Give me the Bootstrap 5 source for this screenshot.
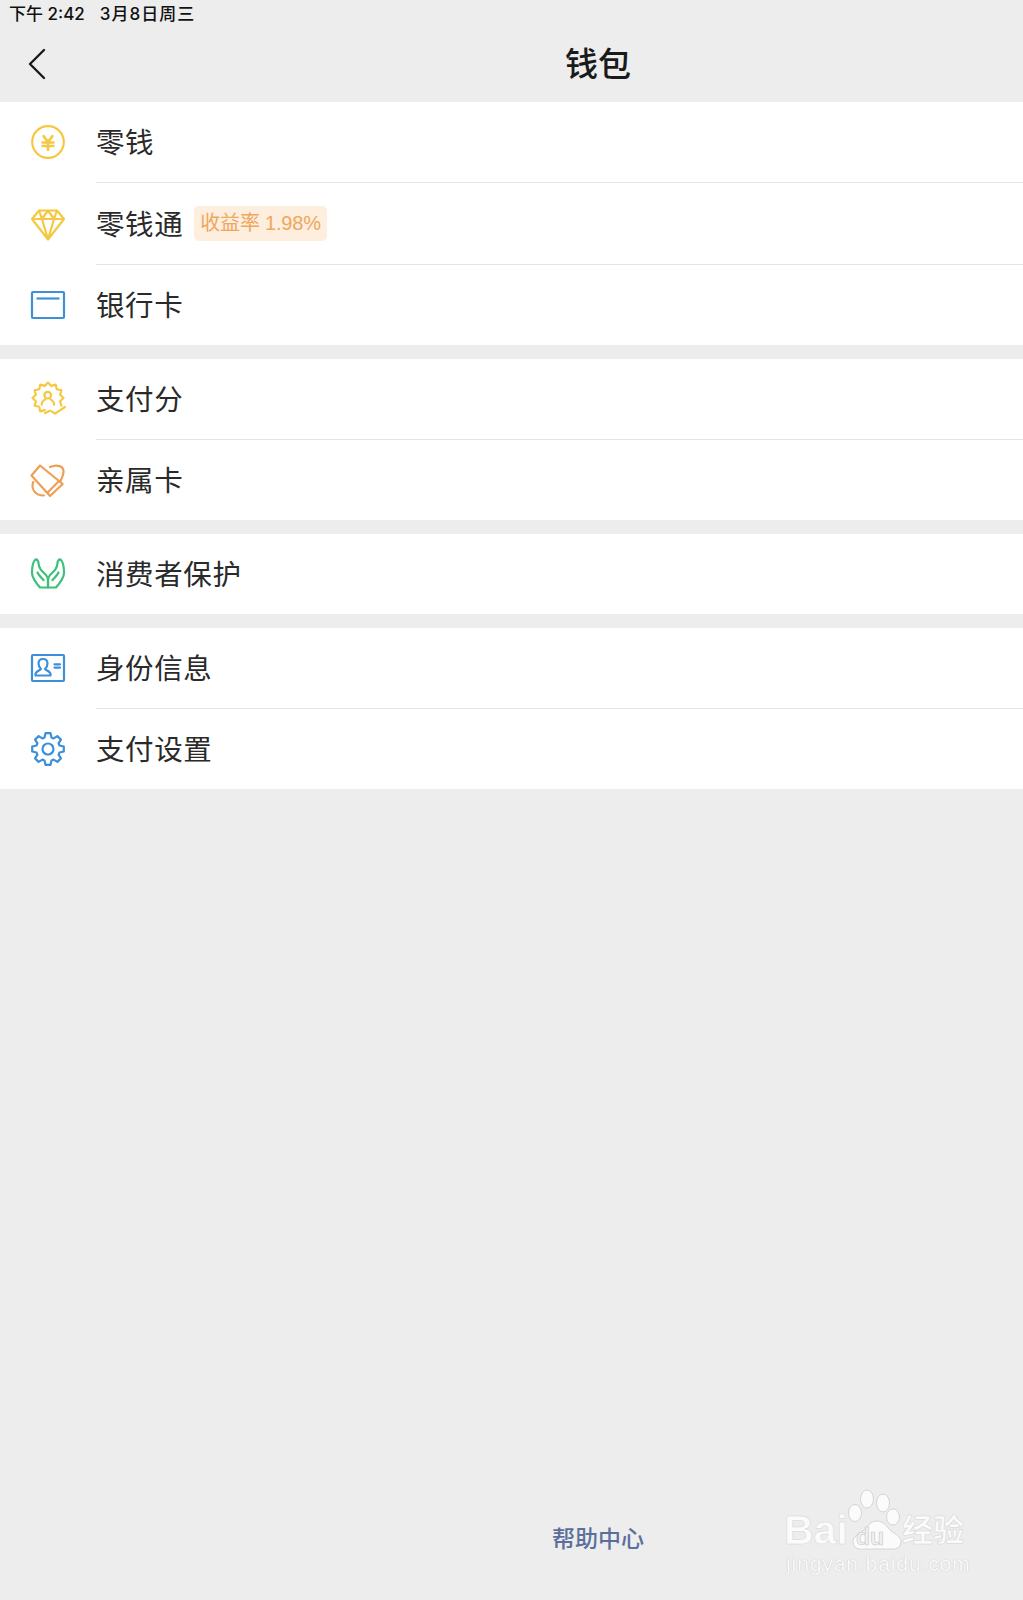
<!DOCTYPE html>
<html lang="zh-CN">
<head>
  <meta charset="UTF-8" />
  <meta name="viewport" content="width=device-width, initial-scale=1.0"/>
  <title>钱包</title>
  <link href="https://cdn.jsdelivr.net/npm/bootstrap@5.3.2/dist/css/bootstrap.min.css" rel="stylesheet" />
  <style>
    body {
      background: #ededed;
      font-family: "Noto Sans CJK SC", "Liberation Sans", sans-serif;
      height: 1600px;
      overflow: hidden;
      position: relative;
    }
    .status-bar {
      height: 29px;
      padding-left: 9px;
      font-size: 17px;
      font-weight: 500;
      line-height: 29px;
      color: #111;
      gap: 15px;
      font-family: "Inter", "Noto Sans CJK SC", sans-serif;
    }
    .status-date { letter-spacing: 1px; }
    .title-bar { height: 73px; padding-left: 173px; }
    .back-btn {
      position: absolute;
      left: 26px;
      top: 46px;
    }
    .title-text { font-size: 33px; font-weight: 500; color: #1a1a1a; line-height: 1; margin-top: -6px; }
    .wallet-group { background: #fff; margin-bottom: 14px; }
    .wallet-row { height: 80px; padding-left: 31px; }
    .wallet-row + .wallet-row { height: 81px; }
    .wallet-row.row-tall { height: 82px; }
    .wallet-row svg { width: 34px; height: 34px; flex-shrink: 0; overflow: visible; fill: none; stroke-width: 2.2; stroke-linecap: round; stroke-linejoin: round; }
    .row-body {
      height: 100%;
      margin-left: 31px;
      padding-bottom: 2px;
      font-size: 28.5px;
      color: #2a2a2a;
      letter-spacing: .6px;
    }
    .row-tall .row-body { padding-bottom: 0; }
    .wallet-row + .wallet-row .row-body { border-top: 1px solid #e4e4e4; }
    .rate-tag {
      background: #fdeedd;
      color: #eea75f;
      font-size: 20px;
      line-height: 35px;
      height: 35px;
      padding: 0 6px;
      margin-left: 11px;
      border-radius: 5px;
      letter-spacing: -.2px;
      font-family: "Liberation Sans", "Noto Sans CJK SC", sans-serif;
    }
    .help-link {
      position: absolute;
      left: 173px;
      right: 0;
      top: 1520px;
      text-align: center;
      font-size: 23px;
      font-weight: 500;
      color: #5b6f9c;
      line-height: 34px;
    }
    .watermark {
      position: absolute;
      left: 784px;
      top: 1488px;
      width: 190px;
      height: 100px;
      color: #fbfbfb;
    }
    .wm-bai, .wm-du, .wm-jy { position: absolute; -webkit-text-stroke: .5px #d4d4d4; }
    .wm-bai { left: 0; top: 22px; font: 700 41px/1 "Liberation Sans", sans-serif; }
    .wm-du { left: 72px; top: 38px; font: 700 23px/1 "Liberation Sans", sans-serif; color: #f0f0f0; -webkit-text-stroke: .6px #c8c8c8; }
    .wm-jy { left: 118px; top: 21px; font: 700 31px/1.2 "Noto Sans CJK SC", sans-serif; white-space: nowrap; }
    .wm-url { position: absolute; left: 2px; top: 65px; font: 400 21px/1 "Liberation Sans", sans-serif; letter-spacing: .9px; white-space: nowrap; color: #fafafa; text-shadow: 0 0 1px #b4b4b4; }
    .wm-paw { position: absolute; left: 60px; top: 0; width: 60px; height: 62px; }
  </style>
</head>
<body>
  <div class="status-bar d-flex">
    <span>下午 2:42</span>
    <span class="status-date">3月8日周三</span>
  </div>

  <div class="title-bar d-flex align-items-center justify-content-center">
    <div class="title-text">钱包</div>
  </div>
  <svg class="back-btn" width="24" height="36" viewBox="0 0 24 36" fill="none" stroke="#1a1a1a" stroke-width="2.4" stroke-linecap="round" stroke-linejoin="round"><path d="M18 4 4 18l14 14"/></svg>

  <!-- balance group -->
  <div class="wallet-group">
    <div class="wallet-row d-flex align-items-center">
      <svg viewBox="0 0 34 34" stroke="#f5c842"><circle cx="17" cy="17" r="15.800"/><path d="m12.500 11 4.500 6 4.500-6M11.500 17.500h11M11.500 21h11M17 17v8" stroke-width="2.500"/></svg>
      <div class="row-body flex-grow-1 d-flex align-items-center">零钱</div>
    </div>
    <div class="wallet-row row-tall d-flex align-items-center">
      <svg viewBox="0 0 34 34" stroke="#f5c842"><path d="M8 4.500h18l7 8.500-16 20.500L1 13zM1 13h32M8 4.500 11 13l6 20.500L23 13l3-8.500M11 13l6-8.500 6 8.500"/></svg>
      <div class="row-body flex-grow-1 d-flex align-items-center">零钱通<span class="rate-tag">收益率 1.98%</span></div>
    </div>
    <div class="wallet-row d-flex align-items-center">
      <svg viewBox="0 0 34 34" stroke="#3d8fd9"><rect x="1" y="4" width="32" height="26" rx="1"/><path d="M5.500 10.500h23" stroke-linecap="butt"/></svg>
      <div class="row-body flex-grow-1 d-flex align-items-center">银行卡</div>
    </div>
  </div>

  <!-- services group -->
  <div class="wallet-group">
    <div class="wallet-row d-flex align-items-center">
      <svg viewBox="0 0 34 34" stroke="#f5c842"><path d="M13.800 28.100 9.250 29.400 8.200 24.800 3.600 23.750 4.900 19.200 1.500 16 4.900 12.800 3.600 8.250 8.200 7.200 9.250 2.600 13.800 3.900 17 .5 20.200 3.900 24.750 2.600 25.800 7.200 30.400 8.250 29.100 12.800 32.500 16 29.100 19.200 30.400 23.750"/><path d="m20.700 29.300 3.300 2.400L34 25M14 31l5-2.300"/><circle cx="16.700" cy="13.200" r="3.300"/><path d="M10.700 22.700c0-3 2-4.700 3.700-5.500M23 22.700c0-3-2-4.700-3.700-5.500"/></svg>
      <div class="row-body flex-grow-1 d-flex align-items-center">支付分</div>
    </div>
    <div class="wallet-row d-flex align-items-center">
      <svg viewBox="0 0 34 34" stroke="#ee9f55"><path d="M9 2.500 31.700 21 19 33 0.500 12.500z"/><path d="M28 18 16.700 29.500M19 4c7-3 14-1 13.500 5-.2 3.500-2 7-3.500 10M2.300 19C0 25 3 32.500 13 32.500"/></svg>
      <div class="row-body flex-grow-1 d-flex align-items-center">亲属卡</div>
    </div>
  </div>

  <!-- protection group -->
  <div class="wallet-group">
    <div class="wallet-row d-flex align-items-center">
      <svg viewBox="0 0 34 34" stroke="#3cc07a"><path d="M9 30.500C6 27 1 21 1 16 1 11 2 5 4 3c2-1.500 3.500 1 3.500 3 0 3 1 5 2.500 7l5 5c2 2 2 4 2 6v6.500z"/><path d="M25 30.500C28 27 33 21 33 16c0-5-1-11-3-13-2-1.500-3.500 1-3.500 3 0 3-1 5-2.500 7l-5 5c-2 2-2 4-2 6v6.500z"/><path d="M6.500 15.500C8 19 11 21 12.500 23M27.500 15.500C26 19 23 21 21.500 23"/></svg>
      <div class="row-body flex-grow-1 d-flex align-items-center">消费者保护</div>
    </div>
  </div>

  <!-- settings group -->
  <div class="wallet-group">
    <div class="wallet-row d-flex align-items-center">
      <svg viewBox="0 0 34 34" stroke="#3d8fd9"><rect x="1" y="4" width="32" height="26" rx="1"/><path d="M4.500 24.500V23c0-2.500 4-3.500 5.500-5-2-2-2.500-4-2.500-5.500 0-3 2-4.500 4.500-4.500s4.500 1.500 4.500 4.500c0 1.500-.5 3.500-2.500 5.500 1.500 1.500 5.500 2.500 5.500 5v1.500z"/><path d="M23.500 13.300h5.500M23.500 16.600h5.500"/></svg>
      <div class="row-body flex-grow-1 d-flex align-items-center">身份信息</div>
    </div>
    <div class="wallet-row d-flex align-items-center">
      <svg viewBox="0 0 34 34" stroke="#3d8fd9"><circle cx="17" cy="17" r="5.500"/><path d="M13.500 5.500 14.500 1.200H19.500L20.500 5.500 22.600 6.400 26.400 4.100 29.900 7.600 27.600 11.400 28.500 13.500 32.800 14.500V19.500L28.500 20.500 27.600 22.600 29.900 26.400 26.400 29.900 22.600 27.600 20.500 28.500 19.500 32.800H14.500L13.500 28.500 11.400 27.600 7.600 29.900 4.100 26.400 6.400 22.600 5.500 20.500 1.200 19.500V14.500L5.500 13.500 6.400 11.400 4.100 7.600 7.600 4.100 11.400 6.400z"/></svg>
      <div class="row-body flex-grow-1 d-flex align-items-center">支付设置</div>
    </div>
  </div>

  <div class="help-link">帮助中心</div>

  <div class="watermark">
    <svg class="wm-paw" viewBox="0 0 60 62" fill="#fbfbfb" stroke="#d4d4d4" stroke-width="1">
      <ellipse cx="11" cy="25" rx="6.500" ry="8.500"/>
      <ellipse cx="23" cy="11" rx="6.500" ry="9"/>
      <ellipse cx="39" cy="15" rx="6.500" ry="9"/>
      <ellipse cx="49" cy="29" rx="6.500" ry="8"/>
      <path d="M33 33c-7 0-9 6-14 10-5 3-10 6-10 11 0 6 6 8 11 7h26c5 1 11-1 11-7 0-5-5-8-10-11-4-4-7-10-14-10z"/>
    </svg>
    <span class="wm-bai">Bai</span>
    <span class="wm-du">du</span>
    <span class="wm-jy">经验</span>
    <span class="wm-url">jingyan.baidu.com</span>
  </div>

  <script src="https://cdn.jsdelivr.net/npm/bootstrap@5.3.2/dist/js/bootstrap.bundle.min.js"></script>
</body>
</html>
